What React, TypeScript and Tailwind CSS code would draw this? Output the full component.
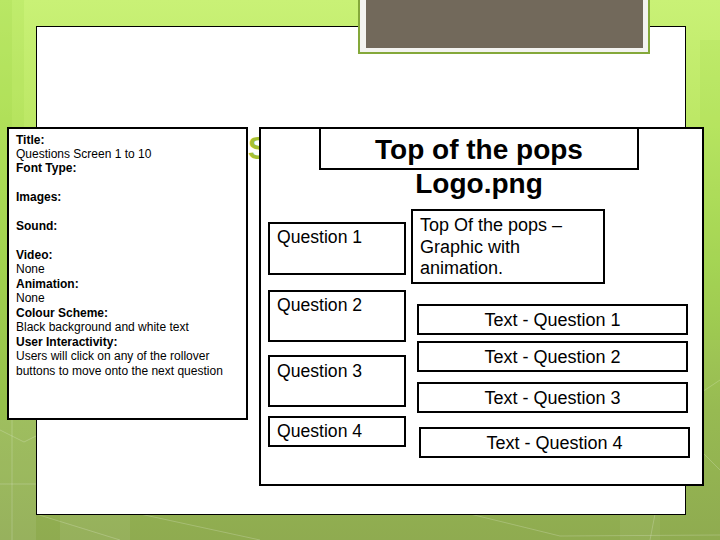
// Slide with storyboard boxes laid over it
const font = "font-['Liberation_Sans',Arial,sans-serif]"

const notes = [
  { text: "Title:", bold: true },
  { text: "Questions Screen 1 to 10" },
  { text: "Font Type:", bold: true },
  { text: "" },
  { text: "Images:", bold: true },
  { text: "" },
  { text: "Sound:", bold: true },
  { text: "" },
  { text: "Video:", bold: true },
  { text: "None" },
  { text: "Animation:", bold: true },
  { text: "None" },
  { text: "Colour Scheme:", bold: true },
  { text: "Black background and white text" },
  { text: "User Interactivity:", bold: true },
  { text: "Users will click on any of the rollover" },
  { text: "buttons to move onto the next question" },
]

const App = () => {
  return (
    <div className={`relative w-[720px] h-[540px] overflow-hidden text-black ${font} bg-[linear-gradient(180deg,#c9f176_0%,#bde866_22%,#a9d658_48%,#97ba52_76%,#8fab50_100%)]`}>
      {/* Background facets */}
      <svg className="absolute inset-0" width="720" height="540" viewBox="0 0 720 540" fill="none">
        <rect x="0" y="0" width="12" height="420" fill="#8fcb3a" opacity="0.28" />
        <rect x="12" y="0" width="12" height="420" fill="#8fcb3a" opacity="0.14" />
        <rect x="700" y="40" width="20" height="300" fill="#8fcb3a" opacity="0.12" />
        <path d="M0 430 L24 442 L36 436 M0 484 L36 484 M12 420 L12 540 M36 514 L120 540 M140 514 L260 540 M470 514 L560 536 L720 535 M655 514 L650 540 M690 400 L720 380 M690 440 L720 470" stroke="#ffffff" strokeOpacity="0.2" />
        <rect x="0" y="420" width="36" height="120" fill="#ffffff" opacity="0.08" />
        <rect x="60" y="514" width="70" height="26" fill="#ffffff" opacity="0.07" />
        <rect x="620" y="514" width="40" height="26" fill="#ffffff" opacity="0.05" />
      </svg>

      {/* White content panel */}
      <div className="absolute left-[36px] top-[26px] w-[650px] h-[489px] bg-white border border-black" />

      {/* Title tab */}
      <div className="absolute left-[358px] top-0 w-[292px] h-[54px] bg-[#f3f3f0] border-2 border-t-0 border-[#84a83a] pl-[6px] pr-[5px] pb-[4px]">
        <div className="w-full h-full bg-[#72695b]" />
      </div>

      {/* Slide heading, mostly hidden by the boxes */}
      <div className="absolute left-[248px] top-[131px] text-[31px] leading-[36px] font-bold text-[#a4c034]">S</div>

      {/* Storyboard */}
      <div className="relative flex items-start gap-[11px] pl-[7px] pt-[127px]">
        {/* Notes */}
        <div className="w-[241px] h-[293px] bg-white border-[2px] border-black pl-[7px] pt-[3.5px] text-[12px] leading-[14.45px]">
          {notes.map((line, i) => (
            <div key={i} className={`h-[14.45px] whitespace-nowrap ${line.bold ? "font-bold" : ""}`}>
              {line.text}
            </div>
          ))}
        </div>

        {/* Screen layout */}
        <div className="w-[445px] h-[359px] bg-white border-[2px] border-black">
          <div className="ml-[58px] -mt-[2px] w-[320px] h-[43px] border-[2px] border-black pt-[4px] text-center text-[28px] leading-[34px] font-bold">
            Top of the pops
            <br />
            Logo.png
          </div>

          <div className="flex items-start mt-[39px]">
            {/* Question buttons */}
            <div className="flex flex-col w-[138px] ml-[7px] pt-[13px]">
              <Box className="h-[53px]">Question 1</Box>
              <Box className="h-[52px] mt-[15px]">Question 2</Box>
              <Box className="h-[52px] mt-[13px] pt-[4px]">Question 3</Box>
              <Box className="h-[31px] mt-[9px]">Question 4</Box>
            </div>

            <div className="flex flex-col ml-[5px]">
              <div className="w-[194px] h-[75px] border-[2px] border-black pl-[7px] pt-[4px] text-[18px] leading-[21.5px]">
                Top Of the pops –
                <br />
                Graphic with
                <br />
                animation.
              </div>

              {/* Question text */}
              <div className="flex flex-col ml-[6px] mt-[20px]">
                <TextBox>Text - Question 1</TextBox>
                <TextBox className="mt-[6px]">Text - Question 2</TextBox>
                <TextBox className="mt-[10px]">Text - Question 3</TextBox>
                <TextBox className="mt-[14px] ml-[2px]">Text - Question 4</TextBox>
              </div>
            </div>
          </div>
        </div>
      </div>
    </div>
  )
}

const Box = (props: any) => {
  return (
    <div className={`border-[2px] border-black pl-[7px] pt-[3px] text-[17.6px] leading-[21px] ${props.className}`}>
      {props.children}
    </div>
  )
}

const TextBox = (props: any) => {
  return (
    <div className={`w-[271px] h-[31px] border-[2px] border-black flex items-center justify-center pt-[1px] text-[18px] leading-[21px] ${props.className ?? ""}`}>
      {props.children}
    </div>
  )
}

export default App
